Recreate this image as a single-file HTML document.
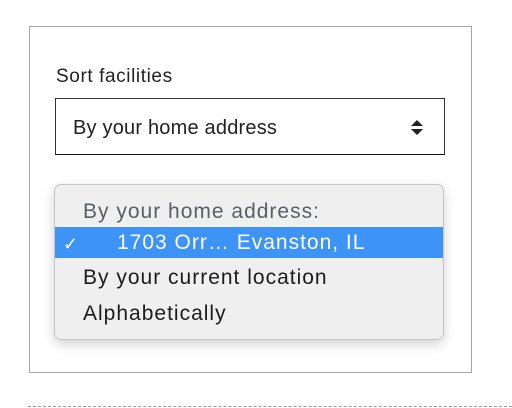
<!DOCTYPE html><html><head><style>
body{margin:0;width:512px;height:408px;background:#fff;position:relative;overflow:hidden;font-family:"Liberation Sans",sans-serif}
.a{position:absolute;white-space:nowrap}
.d{font-size:21px;letter-spacing:1px}
</style></head><body>
<div class="a" style="left:29px;top:26px;width:441px;height:345px;border:1px solid #a6a6a6"></div>
<div class="a" style="left:56px;top:66px;font-size:19px;letter-spacing:0.6px;color:#222">Sort facilities</div>
<div class="a" style="left:55px;top:98px;width:388px;height:55px;border:1px solid #333;border-bottom-color:#112"></div>
<div class="a" style="left:73px;top:117px;font-size:20px;letter-spacing:0.2px;color:#222">By your home address</div>
<svg class="a" style="left:410px;top:119px" width="14" height="18"><path d="M1 7 L7 1 L13 7Z M1 10 L7 16 L13 10Z" fill="#222"/></svg>
<div class="a" style="left:54px;top:184px;width:388px;height:154px;background:#efefef;border:1px solid #c5c5c5;border-radius:7px;box-shadow:0 4px 12px rgba(0,0,0,.18)"></div>
<div class="a d" style="left:83px;top:200px;color:#5a5e66">By your home address:</div>
<div class="a" style="left:55px;top:227px;width:388px;height:31px;background:#3d94f6"></div>
<div class="a" style="left:63px;top:234px;font-size:18px;color:#fff">✓</div>
<div class="a d" style="left:117px;top:231px;color:#fff">1703 Orr… Evanston, IL</div>
<div class="a d" style="left:83px;top:266px;color:#1c1c1e">By your current location</div>
<div class="a d" style="left:83px;top:302px;color:#1c1c1e">Alphabetically</div>
<div class="a" style="left:28px;top:406px;width:484px;border-top:1px dashed #999"></div>
</body></html>
